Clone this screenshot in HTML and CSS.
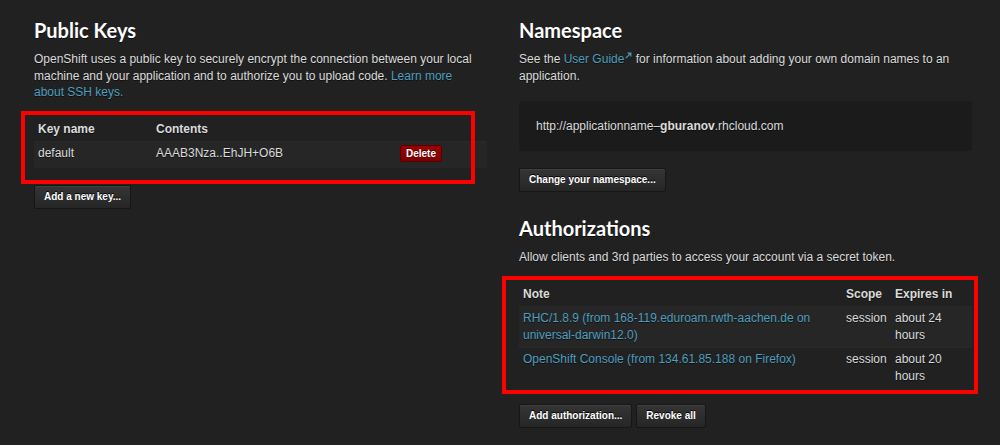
FILE: index.html
```html
<!DOCTYPE html>
<html>
<head>
<meta charset="utf-8">
<link rel="stylesheet" href="styles.css">
</head>
<body>
<div class="page">
  <section class="col">
    <h2>Public Keys</h2>
    <p class="narrow">OpenShift uses a public key to securely encrypt the connection between your local machine and your application and to authorize you to upload code. <a href="#">Learn more about SSH keys.</a></p>
    <div class="table-wrap keys">
      <table>
        <colgroup><col class="c-name"><col class="c-contents"><col></colgroup>
        <thead><tr><th>Key name</th><th>Contents</th><th></th></tr></thead>
        <tbody>
          <tr class="odd"><td>default</td><td>AAAB3Nza..EhJH+O6B</td><td><span class="btn-danger">Delete</span></td></tr>
        </tbody>
      </table>
      <div class="annot annot-keys"></div>
    </div>
    <div class="actions"><span class="btn">Add a new key...</span></div>
  </section>
  <section class="col">
    <h2>Namespace</h2>
    <p class="ns-intro">See the <a href="#">User Guide<svg class="ext" width="7" height="7" viewBox="0 0 7 7"><path d="M0.8 6.2 L5.6 1.4 M2.6 1.2 H5.8 V4.4" stroke="#4f9fbf" stroke-width="1.2" fill="none"/></svg></a> for information about adding your own domain names to an application.</p>
    <div class="ns-box">http://applicationname–<b>gburanov</b>.rhcloud.com</div>
    <div class="actions ns-actions"><span class="btn">Change your namespace...</span></div>
    <h2 class="h-auth">Authorizations</h2>
    <p>Allow clients and 3rd parties to access your account via a secret token.</p>
    <div class="table-wrap auths">
      <table>
        <colgroup><col class="c-note"><col class="c-scope"><col></colgroup>
        <thead><tr><th>Note</th><th>Scope</th><th>Expires in</th></tr></thead>
        <tbody>
          <tr class="odd"><td><a href="#">RHC/1.8.9 (from 168-119.eduroam.rwth-aachen.de on universal-darwin12.0)</a></td><td>session</td><td>about 24 hours</td></tr>
          <tr><td><a href="#">OpenShift Console (from 134.61.85.188 on Firefox)</a></td><td>session</td><td>about 20 hours</td></tr>
        </tbody>
      </table>
      <div class="annot annot-auths"></div>
    </div>
    <div class="actions auth-actions"><span class="btn">Add authorization...</span><span class="btn">Revoke all</span></div>
  </section>
</div>
</body>
</html>
```
FILE: styles.css
```css
html, body {
  margin: 0;
  padding: 0;
  background: #212121;
}
body {
  font-family: "Liberation Sans", Arial, sans-serif;
  font-size: 12px;
  line-height: 17px;
  color: #dcdcdc;
  text-shadow: 0 1px 0 rgba(0,0,0,0.6);
}
.page {
  display: flex;
  gap: 32px;
  padding: 17px 28px 0 34px;
}
.col {
  width: 453px;
  flex: none;
}
h2 {
  font-family: Lato, "Open Sans", sans-serif;
  font-weight: 700;
  font-size: 20px;
  line-height: 26px;
  color: #fff;
  margin: 0 0 8px;
}
p {
  margin: 0 0 16px;
  line-height: 16.5px;
}
p.narrow {
  padding-right: 10px;
}
p.ns-intro {
  margin-bottom: 17px;
}
a {
  color: #4f9fbf;
  text-decoration: none;
}
.ext {
  margin-left: 1px;
  vertical-align: 4px;
}
.table-wrap {
  position: relative;
}
table {
  width: 100%;
  border-collapse: collapse;
  table-layout: fixed;
}
th, td {
  text-align: left;
  vertical-align: top;
  padding: 3px 4px;
}
th {
  font-weight: 700;
  padding-top: 4px;
  padding-bottom: 3px;
}
tbody td {
  border-top: 1px solid #292929;
}
tr.odd td {
  background: #262626;
}
.keys tbody td {
  padding-top: 3px;
  padding-bottom: 6px;
}
.c-name { width: 118px; }
.c-contents { width: 244px; }
.c-note { width: 323px; }
.c-scope { width: 49px; }
.btn-danger {
  display: inline-block;
  padding: 1px 5px;
  font-size: 10px;
  font-weight: 700;
  line-height: 13px;
  color: #fff;
  background: linear-gradient(#9e0000, #780000);
  border: 1px solid #5a0000;
  border-radius: 2px;
  text-shadow: 0 -1px 0 rgba(0,0,0,0.5);
  vertical-align: top;
}
.actions {
  display: flex;
  gap: 4px;
  margin-top: 17px;
}
.btn {
  display: inline-block;
  padding: 4px 9px;
  font-size: 10px;
  font-weight: 700;
  line-height: 14px;
  color: #fff;
  background: linear-gradient(#353535, #262626);
  border: 1px solid #161616;
  border-radius: 2px;
  box-shadow: inset 0 1px 0 rgba(255,255,255,0.06);
  text-shadow: 0 -1px 0 #000;
}
.ns-box {
  background: #1b1b1b;
  border-radius: 3px;
  height: 50px;
  line-height: 50px;
  padding: 0 17px;
  font-size: 12px;
}
.ns-actions { margin-top: 17px; }
.h-auth { margin-top: 23px; }
.auth-actions { margin-top: 16px; }
.annot {
  position: absolute;
  border: 4px solid #ff0000;
  pointer-events: none;
}
.annot-keys {
  left: -13px;
  right: 12px;
  top: -6px;
  bottom: -16px;
}
.annot-auths {
  left: -17px;
  right: -6px;
  top: -6px;
  bottom: -6px;
}
```
